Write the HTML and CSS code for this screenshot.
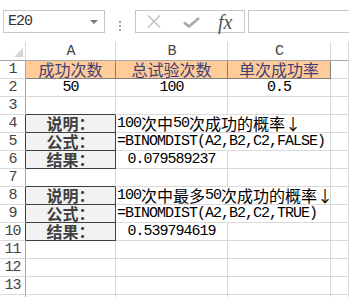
FILE: index.html
```html
<!DOCTYPE html>
<html lang="zh-CN">
<head>
  <meta charset="UTF-8">
  <title>BINOMDIST</title>
  <link rel="stylesheet" href="styles.css">
</head>
<body>
  <div class="bar">
    <div class="namebox"><span class="en">E20</span><span class="caret"></span></div>
    <div class="grip"><i></i><i></i><i></i></div>
    <div class="fxbox">
      <svg class="ico-x" width="14" height="13" viewBox="0 0 14 13"><path d="M1 0.5 L13 12.5 M13 0.5 L1 12.5" stroke="#c4c4c4" stroke-width="1.6" fill="none"/></svg>
      <svg class="ico-ok" width="17" height="11" viewBox="0 0 17 11"><path d="M1 5.5 L6 9.5 L16 1" stroke="#a9a9a9" stroke-width="2.6" fill="none"/></svg>
      <span class="fx">fx</span>
    </div>
    <div class="formula"></div>
  </div>

  <div class="sheet">
    <div class="c h corner"><svg width="9" height="9" viewBox="0 0 9 9"><polygon points="9,0 9,9 0,9" fill="#d6d6d6"/></svg></div>
    <div class="c h"><span class="en">A</span></div>
    <div class="c h"><span class="en">B</span></div>
    <div class="c h"><span class="en">C</span></div>
    <div class="c h"></div>

    <div class="c r"><span class="en">1</span></div>
    <div class="c inp">成功次数</div>
    <div class="c inp">总试验次数</div>
    <div class="c inp">单次成功率</div>
    <div class="c"></div>

    <div class="c r"><span class="en">2</span></div>
    <div class="c mid"><span class="en">50</span></div>
    <div class="c mid"><span class="en">100</span></div>
    <div class="c mid"><span class="en">0.5</span></div>
    <div class="c"></div>

    <div class="c r"><span class="en">3</span></div>
    <div class="c out-top"></div>
    <div class="c"></div>
    <div class="c"></div>
    <div class="c"></div>

    <div class="c r r-out"><span class="en">4</span></div>
    <div class="c out">说明：</div>
    <div class="c wide"><span class="en">100</span>次中<span class="en">50</span>次成功的概率↓</div>
    <div class="c"></div>

    <div class="c r r-out"><span class="en">5</span></div>
    <div class="c out">公式：</div>
    <div class="c wide"><span class="en">=BINOMDIST(A2,B2,C2,FALSE)</span></div>
    <div class="c"></div>

    <div class="c r r-out"><span class="en">6</span></div>
    <div class="c out">结果：</div>
    <div class="c mid"><span class="en">0.079589237</span></div>
    <div class="c"></div>
    <div class="c"></div>

    <div class="c r"><span class="en">7</span></div>
    <div class="c out-top"></div>
    <div class="c"></div>
    <div class="c"></div>
    <div class="c"></div>

    <div class="c r r-out"><span class="en">8</span></div>
    <div class="c out">说明：</div>
    <div class="c wide"><span class="en">100</span>次中最多<span class="en">50</span>次成功的概率↓</div>
    <div class="c"></div>

    <div class="c r r-out"><span class="en">9</span></div>
    <div class="c out">公式：</div>
    <div class="c wide"><span class="en">=BINOMDIST(A2,B2,C2,TRUE)</span></div>
    <div class="c"></div>

    <div class="c r r-out"><span class="en">10</span></div>
    <div class="c out">结果：</div>
    <div class="c mid"><span class="en">0.539794619</span></div>
    <div class="c"></div>
    <div class="c"></div>

    <div class="c r"><span class="en">11</span></div>
    <div class="c"></div><div class="c"></div><div class="c"></div><div class="c"></div>
    <div class="c r"><span class="en">12</span></div>
    <div class="c"></div><div class="c"></div><div class="c"></div><div class="c"></div>
    <div class="c r"><span class="en">13</span></div>
    <div class="c"></div><div class="c"></div><div class="c"></div><div class="c"></div>
    <div class="c r"></div>
    <div class="c"></div><div class="c"></div><div class="c"></div><div class="c"></div>
  </div>
</body>
</html>
```

FILE: styles.css
```css
:root { --grid: #d9d9d9; --head: #a6a6a6; --box: #c6c6c6; }
* { box-sizing: border-box; }
body { margin: 0; background: #fff; font-family: "Noto Sans CJK SC", sans-serif; overflow: hidden; }

.en { font-family: "Liberation Mono", monospace; font-size: 15px; letter-spacing: -1px; }

/* formula bar */
.bar { display: flex; height: 42px; padding: 10px 0 0 3px; }
.namebox { width: 102px; height: 23px; border: 1px solid var(--box); display: flex; align-items: center; padding-left: 4px; color: #333; }
.caret { margin-left: auto; margin-right: 6px; border-left: 4px solid transparent; border-right: 4px solid transparent; border-top: 4px solid #777; }
.grip { width: 30px; display: flex; flex-direction: column; align-items: center; justify-content: center; gap: 2px; padding-bottom: 1px; }
.grip i { width: 2px; height: 2px; background: #a0a0a0; }
.fxbox { width: 110px; height: 23px; border: 1px solid var(--box); display: flex; align-items: center; padding-left: 11px; }
.ico-ok { margin-left: 22px; margin-top: 2px; }
.fx { margin-left: 18px; font-family: "Liberation Serif", serif; font-style: italic; font-size: 20px; color: #555; line-height: 20px; }
.formula { flex: 1; height: 23px; margin-left: 3px; border: 1px solid var(--box); border-right: none; }

/* grid */
.sheet { display: grid; grid-template-columns: 26px 90px 112px 103px 1fr; grid-template-rows: 19px; grid-auto-rows: 18px; }
.c { border-right: 1px solid var(--grid); border-bottom: 1px solid var(--grid); display: flex; align-items: center; white-space: nowrap; line-height: 17px; font-size: 16px; color: #000; }
.h { justify-content: center; color: #444; border-bottom-color: var(--head); }
.h .en, .r .en { font-size: 15px; }
.corner { justify-content: flex-end; align-items: flex-end; padding: 0 2px 3px 0; }
.r { justify-content: center; color: #444; border-right-color: var(--head); }
.r-out { border-right-color: #3f3f3f; }
.mid { justify-content: center; }
.wide { grid-column: span 2; padding-left: 1px; }

/* cell styles */
.inp { justify-content: center; background: #ffcc99; color: #3f3f76; border-right-color: #7f7f7f; border-bottom-color: #7f7f7f; }
.out { justify-content: center; background: #f2f2f2; color: #3f3f3f; font-weight: bold; border-right-color: #3f3f3f; border-bottom-color: #3f3f3f; }
.out-top { border-bottom-color: #3f3f3f; }
```
